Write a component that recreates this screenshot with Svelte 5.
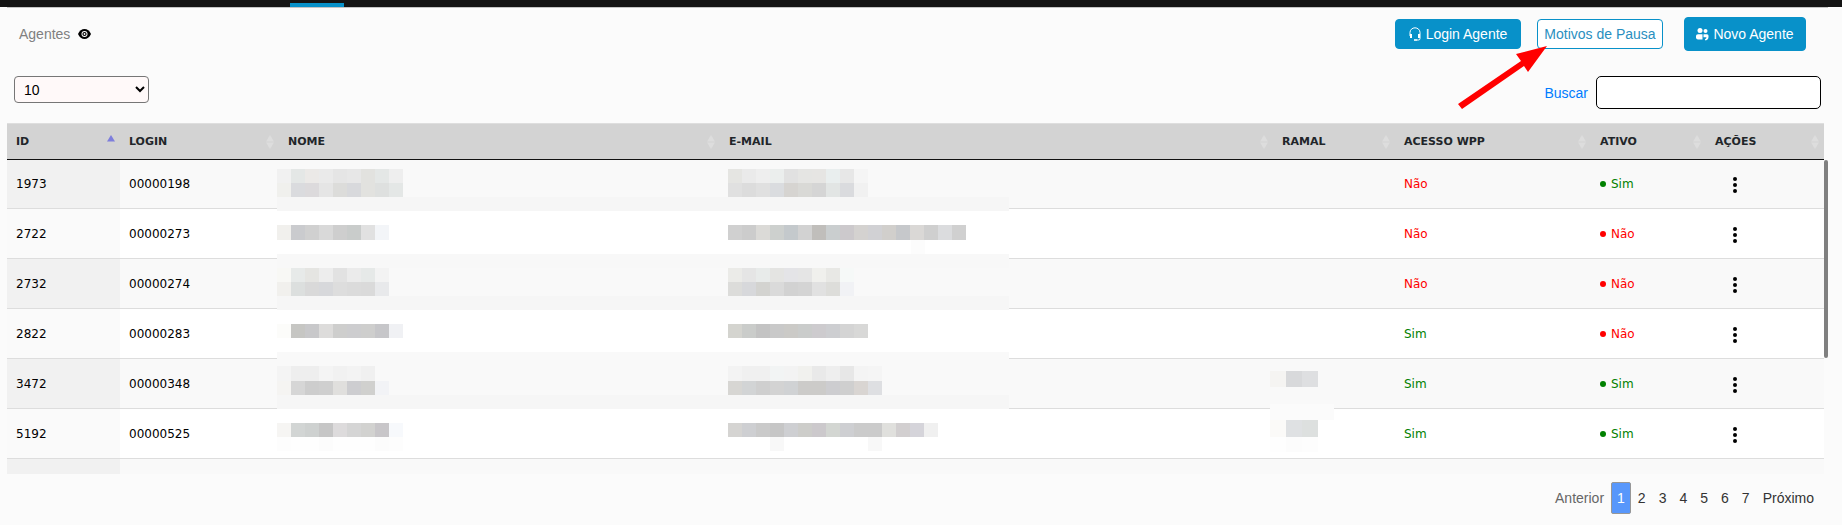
<script>
	/**
	 * Agentes: list of call-center agents with search, page size and pagination.
	 */
	let pageSize = $state('10');
	let search = $state('');
	let page = $state(1);

	const columns = [
		{ key: 'id', label: 'ID', sorted: true },
		{ key: 'login', label: 'LOGIN' },
		{ key: 'nome', label: 'NOME' },
		{ key: 'email', label: 'E-MAIL' },
		{ key: 'ramal', label: 'RAMAL' },
		{ key: 'wpp', label: 'ACESSO WPP' },
		{ key: 'ativo', label: 'ATIVO' },
		{ key: 'acoes', label: 'AÇÕES' }
	];

	const agents = [
		{ id: '1973', login: '00000198', wpp: false, ativo: true },
		{ id: '2722', login: '00000273', wpp: false, ativo: false },
		{ id: '2732', login: '00000274', wpp: false, ativo: false },
		{ id: '2822', login: '00000283', wpp: true, ativo: false },
		{ id: '3472', login: '00000348', wpp: true, ativo: true },
		{ id: '5192', login: '00000525', wpp: true, ativo: true },
		{ id: '', login: '', wpp: null, ativo: null }
	];

	const pages = [1, 2, 3, 4, 5, 6, 7];

	// Background bands of the masked area: y, height, colour
	const bands = [
		[9, 28, '#f9f9f9'],
		[37, 14, '#f6f6f6'],
		[51, 43, '#ffffff'],
		[94, 14, '#f8f8f8'],
		[108, 28, '#f9f9f9'],
		[136, 14, '#f6f6f6'],
		[150, 42, '#ffffff'],
		[192, 43, '#f9f9f9'],
		[235, 14, '#f6f6f6'],
		[249, 42, '#ffffff']
	];

	// Masked personal data, as runs of blocks: x, y, height, colours
	const runs = [
		[0, 9, 14, 'f1f1f1 e4e7e6 ebe9e7 eaeaea e5e5e5 e7e7e7 e2e2df e4e7e6 eeeeee'],
		[0, 23, 14, 'f0f0ed dadbde dcdadc e5e5e5 dcdcda d8d9dc e2e2df dee0df e4e7e6'],
		[0, 65, 15, 'f1f0ed cacbce d0d0d0 d9d9d9 cecece c9cccb e1e1e1 f3f5f8'],
		[0, 108, 14, 'f8f8f5 e7eae9 e5e5e2 ededed e2e2e2 ebebeb e6e9e8 f3f3f3'],
		[0, 122, 14, 'f1f0ed dcdfde d9d9d9 d7d8db dddddd dbdbdb dadada e8e9eb'],
		[0, 164, 14, 'fcfcfa c6c6c3 c8c8ca dddcdb cececd cdcdcf cececd c6c6c9 f0f1f4'],
		[0, 206, 15, 'f4f4f4 eeeeee eeeeee f4f4f4 f1f1f1 f3f3f3 f0f0f0'],
		[0, 221, 14, 'f5f4f2 d6d6d6 cdcdcd cfcfcf e0dfdd cdcdd0 d0d0ce f2f3f6'],
		[0, 263, 14, 'f6f5f3 d2d5d4 ced1d0 c6c6c6 dddbdc d5d5d5 d2d2d0 c8c6c9 f7f9fc'],
		[0, 277, 14, 'fdfdfd fefefe fefefe fcfcfc fefefe fefefe fefefe fcfcfc fdfdfd'],
		[451, 9, 14, 'e5e5e2 eaeaea eeeeee ebeeed e1e1e1 e5e5e3 e6e5e3 e9eeee e7e7e7 f5f5f5'],
		[451, 23, 14, 'e0e0e0 dcdcdc e0e0e0 dadcdf d6d4d1 d9d9d6 d5d5d5 e2e5e4 dadbde f1f1f1'],
		[451, 65, 15, 'd0d0d0 cccccc dbdad7 cdd0ce c4c9cc d2d2d2 c0bebb caceCF ccc9cc d4d2d0 d1d1d4 d1cfcc c6c8cb dad8d6 cfcfcf dbdcde d0d0d0'],
		[451, 108, 14, 'ebebe8 e5e5e5 e8ebea e4e4e2 e4e4e7 e5e5e5 f0f0ed e8e8e5 f6f9f8'],
		[451, 122, 14, 'dcdcda d7d8db d3d3d0 dadada d2d2d2 d4d4d4 e1e1e1 ddddda f1f2f5'],
		[451, 164, 14, 'd4d4cf caccca c3c3c3 c9c9c9 cbcac7 cacccb cdcbce cdced1 d4d4d4 d8d8d7'],
		[451, 206, 15, 'f3f3f3 f0f0f0 f0f0f0 f2f4f4 f3f3f3 f1f1ee e9e9e9 eeeeee e7e7e7 f4f4f4 f5f5f5'],
		[451, 221, 14, 'd7d6d3 d2d4d5 cfcfcf d3d3d3 d0d2d4 cccbc9 cccbc9 cdcdd0 cfcfcf d9d5d2 dedfe2'],
		[451, 263, 14, 'd5d4d2 cecfd2 cacaca c6c6c6 cecfd2 cdcdca ccc9cc d3d6d2 cecfd2 cbcbcb cbcbcb e0e0dd d2cfd0 d5d4da f0f0f0'],
		[493, 277, 14, 'f8f8f8'],
		[591, 277, 14, 'f8f8f8'],
		[634, 80, 14, 'fcfcfc']
	];

	const ramalRuns = [
		[0, 0, 16, ['#f5f4f2', '#d8d9db', '#dedfe1']],
		[0, 49, 17, ['#fbfaf8', '#dfe1e3', '#dde0df']],
		[0, 66, 15, ['#fefefe', '#fcfcfc', '#fdfdfd']]
	];
</script>

<div class="topbar">
	<span class="active-tab"></span>
</div>

<main>
	<header>
		<div class="title">
			<span>Agentes</span>
			<svg width="13" height="10" viewBox="0 0 13 10" aria-hidden="true">
				<path d="M0 5C1.5 1.8 3.8 0 6.5 0S11.500 1.800 13 5C11.500 8.200 9.200 10 6.500 10S1.500 8.200 0 5Z" fill="#000" />
				<circle cx="6.500" cy="5" r="3" fill="#fff" />
				<circle cx="6.500" cy="5" r="2.100" fill="#000" />
				<circle cx="6.500" cy="5" r="0.900" fill="#fff" />
			</svg>
		</div>

		<div class="buttons">
			<button class="btn login">
				<svg width="12" height="14" viewBox="0 0 12 14" fill="none" stroke="#fff" aria-hidden="true">
					<path d="M1 9V5.500A5 4.700 0 0 1 11 5.500V11.500Q11 13 9.500 13H8" stroke-width="1" />
					<path d="M2 7V11M10 7V11" stroke-width="2" />
					<path d="M5 13H8" stroke-width="1.600" />
				</svg>
				Login Agente
			</button>
			<div class="pausa">
				<button class="btn outline">Motivos de Pausa</button>
				<svg class="arrow" width="90" height="64" viewBox="0 0 90 64" aria-hidden="true">
					<path d="M89 0L58 8L63 15L0 58L4 63L66 20L70 26Z" fill="#f00" />
				</svg>
			</div>
			<button class="btn novo">
				<svg width="13" height="14" viewBox="0 0 13 14" fill="#fff" aria-hidden="true">
					<circle cx="4" cy="3.500" r="2.500" />
					<circle cx="9.500" cy="4" r="2" />
					<path d="M0 9Q0 7.200 2 7.200H6.500V12.500H2Q0 12.500 0 10.500Z" />
					<path d="M7.500 7.200H11Q12.500 7.200 12.500 8.700V10Q12.500 12.500 9.500 13.500L8.800 12.200Q10.500 11.500 10.500 10.200H7.500Z" />
				</svg>
				Novo Agente
			</button>
		</div>
	</header>

	<div class="controls">
		<select bind:value={pageSize} aria-label="Registros por página">
			<option>10</option>
			<option>25</option>
			<option>50</option>
		</select>
		<div class="search">
			<label for="buscar">Buscar</label>
			<input id="buscar" type="text" bind:value={search} />
		</div>
	</div>

	<div class="table-wrap">
		<div class="scroller">
			<table>
				<thead>
					<tr>
						{#each columns as col}
							<th class="col-{col.key}">
								<div class="th-inner">
									{col.label}
									<svg width="8" height="14" viewBox="0 0 8 14" aria-hidden="true">
										<path d="M0 6.500L4 0L8 6.500Z" fill={col.sorted ? '#7e7edc' : '#dddddd'} />
										{#if !col.sorted}
											<path d="M0 7.500L4 14L8 7.500Z" fill="#dddddd" />
										{/if}
									</svg>
								</div>
							</th>
						{/each}
					</tr>
				</thead>
				<tbody>
					{#each agents as agent}
						<tr>
							<td>{agent.id}</td>
							<td>{agent.login}</td>
							<td></td>
							<td></td>
							<td></td>
							<td>
								{#if agent.wpp !== null}
									<span class:yes={agent.wpp} class:no={!agent.wpp}>{agent.wpp ? 'Sim' : 'Não'}</span>
								{/if}
							</td>
							<td>
								{#if agent.ativo !== null}
									<span class="status" class:yes={agent.ativo} class:no={!agent.ativo}>
										<i class="dot"></i>{agent.ativo ? 'Sim' : 'Não'}
									</span>
								{/if}
							</td>
							<td>
								{#if agent.id}
									<button class="menu" aria-label="Ações">
										<svg width="4" height="16" viewBox="0 0 4 16" aria-hidden="true">
											<circle cx="2" cy="2" r="2" />
											<circle cx="2" cy="8" r="2" />
											<circle cx="2" cy="14" r="2" />
										</svg>
									</button>
								{/if}
							</td>
						</tr>
					{/each}
				</tbody>
			</table>
		</div>

		<svg class="mask" width="732" height="291" shape-rendering="crispEdges" aria-hidden="true">
			{#each bands as [y, h, fill]}
				<rect x="0" {y} width="732" height={h} {fill} />
			{/each}
			{#each runs as [x, y, h, colors]}
				{#each colors.split(' ') as color, i}
					<rect x={x + i * 14} {y} width="14" height={h} fill="#{color}" />
				{/each}
			{/each}
		</svg>
		<svg class="mask-ramal" width="64" height="81" shape-rendering="crispEdges" aria-hidden="true">
			<rect x="0" y="33" width="64" height="16" fill="#fbfbfb" />
			{#each ramalRuns as [x, y, h, colors]}
				{#each colors as fill, i}
					<rect x={x + i * 16} {y} width="16" height={h} {fill} />
				{/each}
			{/each}
		</svg>
		<div class="thumb"></div>
	</div>

	<nav class="pagination" aria-label="Paginação">
		<button class="disabled" onclick={() => (page = Math.max(1, page - 1))}>Anterior</button>
		{#each pages as p}
			<button class:current={p === page} onclick={() => (page = p)}>{p}</button>
		{/each}
		<button onclick={() => (page = Math.min(7, page + 1))}>Próximo</button>
	</nav>
</main>

<style>
	:global(body) {
		margin: 0;
		background: #fbfbfb;
		font-family: 'Liberation Sans', Arial, sans-serif;
		font-size: 14px;
	}

	button,
	input,
	select {
		box-sizing: border-box;
		font: inherit;
	}

	button {
		cursor: pointer;
	}

	.topbar {
		display: flex;
		align-items: flex-end;
		height: 7px;
		padding-left: 290px;
		background: #141414;
	}

	.active-tab {
		width: 54px;
		height: 4px;
		background: #0891c9;
	}

	main {
		padding: 0 14px 0 7px;
	}

	header {
		display: flex;
		align-items: center;
		justify-content: space-between;
		height: 52px;
		border-top: 1px solid #c4c4c4;
		padding: 0 22px 0 12px;
	}

	.title {
		display: flex;
		align-items: center;
		gap: 8px;
		color: #808080;
	}

	.buttons {
		display: flex;
		align-items: center;
	}

	.btn {
		display: flex;
		align-items: center;
		justify-content: center;
		gap: 5px;
		height: 30px;
		padding: 0;
		border: 1px solid #0891c9;
		border-radius: 4px;
		background: #0891c9;
		color: #fff;
		white-space: nowrap;
	}

	.login {
		width: 126px;
	}

	.outline {
		width: 126px;
		background: #fff;
		color: #2a8fc0;
	}

	.novo {
		gap: 4px;
		width: 122px;
		height: 34px;
	}

	.pausa {
		position: relative;
		margin: 0 21px 0 16px;
	}

	.arrow {
		position: absolute;
		top: 27px;
		right: 115px;
	}

	.controls {
		display: flex;
		align-items: flex-start;
		justify-content: space-between;
		padding: 16px 7px 14px 7px;
	}

	select {
		width: 135px;
		height: 27px;
		padding: 0 0 0 5px;
		border: 1px solid #767676;
		border-radius: 4px;
		background: #fff9f9;
		color: #000;
	}

	.search {
		display: flex;
		align-items: center;
		gap: 8px;
		color: #007bff;
	}

	input {
		width: 225px;
		height: 33px;
		padding: 4px 8px;
		border: 1px solid #000;
		border-radius: 5px;
		background: #fff;
	}

	.table-wrap {
		position: relative;
		margin-right: 4px;
	}

	.scroller {
		max-height: 351px;
		overflow: hidden;
	}

	table {
		width: 100%;
		border-collapse: separate;
		border-spacing: 0;
		table-layout: fixed;
		font-family: Verdana, 'DejaVu Sans', sans-serif;
		font-size: 12px;
	}

	th,
	td {
		box-sizing: border-box;
		text-align: left;
		padding: 0 0 0 9px;
	}

	th {
		position: sticky;
		top: 0;
		height: 37px;
		border-top: 1px solid #dedede;
		border-bottom: 1px solid #111;
		background: #d3d3d3;
		color: #212529;
		font-size: 11px;
	}

	.th-inner {
		display: flex;
		align-items: center;
		justify-content: space-between;
		padding-right: 5px;
	}

	.col-id {
		width: 113px;
	}

	.col-login {
		width: 159px;
	}

	.col-nome {
		width: 441px;
	}

	.col-ramal {
		width: 122px;
	}

	.col-wpp {
		width: 196px;
	}

	.col-ativo {
		width: 115px;
	}

	.col-acoes {
		width: 118px;
	}

	td {
		height: 50px;
		border-top: 1px solid #ddd;
		background: #fff;
		color: #000;
	}

	tr:first-child td {
		height: 48px;
		border-top: 0;
	}

	tr:nth-child(odd) td {
		background: #f9f9f9;
	}

	td:first-child {
		background: #fafafa;
	}

	tr:nth-child(odd) td:first-child {
		background: #f1f1f1;
	}

	.yes {
		color: #008000;
	}

	.no {
		color: #f00;
	}

	.status {
		display: flex;
		align-items: center;
		gap: 5px;
	}

	.dot {
		width: 6px;
		height: 6px;
		border-radius: 50%;
		background: currentColor;
	}

	.menu {
		display: flex;
		margin-left: 13px;
		padding: 2px 5px 0;
		border: 0;
		background: none;
	}

	/* Masks lie over the personal data of the rows */
	.mask {
		position: absolute;
		top: 37px;
		left: 270px;
	}

	.mask-ramal {
		position: absolute;
		top: 248px;
		right: 490px;
	}

	.thumb {
		position: absolute;
		top: 37px;
		right: -4px;
		width: 4px;
		height: 198px;
		border-radius: 2px;
		background: #808080;
	}

	.pagination {
		display: flex;
		justify-content: flex-end;
		gap: 1px;
		padding: 8px 8px 11px;
	}

	.pagination button {
		height: 32px;
		padding: 0 5px;
		border: 1px solid transparent;
		border-radius: 2px;
		background: none;
		color: #333;
	}

	.pagination .disabled {
		color: #666;
	}

	.pagination .current {
		border-color: #979797;
		background: #5897fb;
		color: #fff;
	}
</style>
